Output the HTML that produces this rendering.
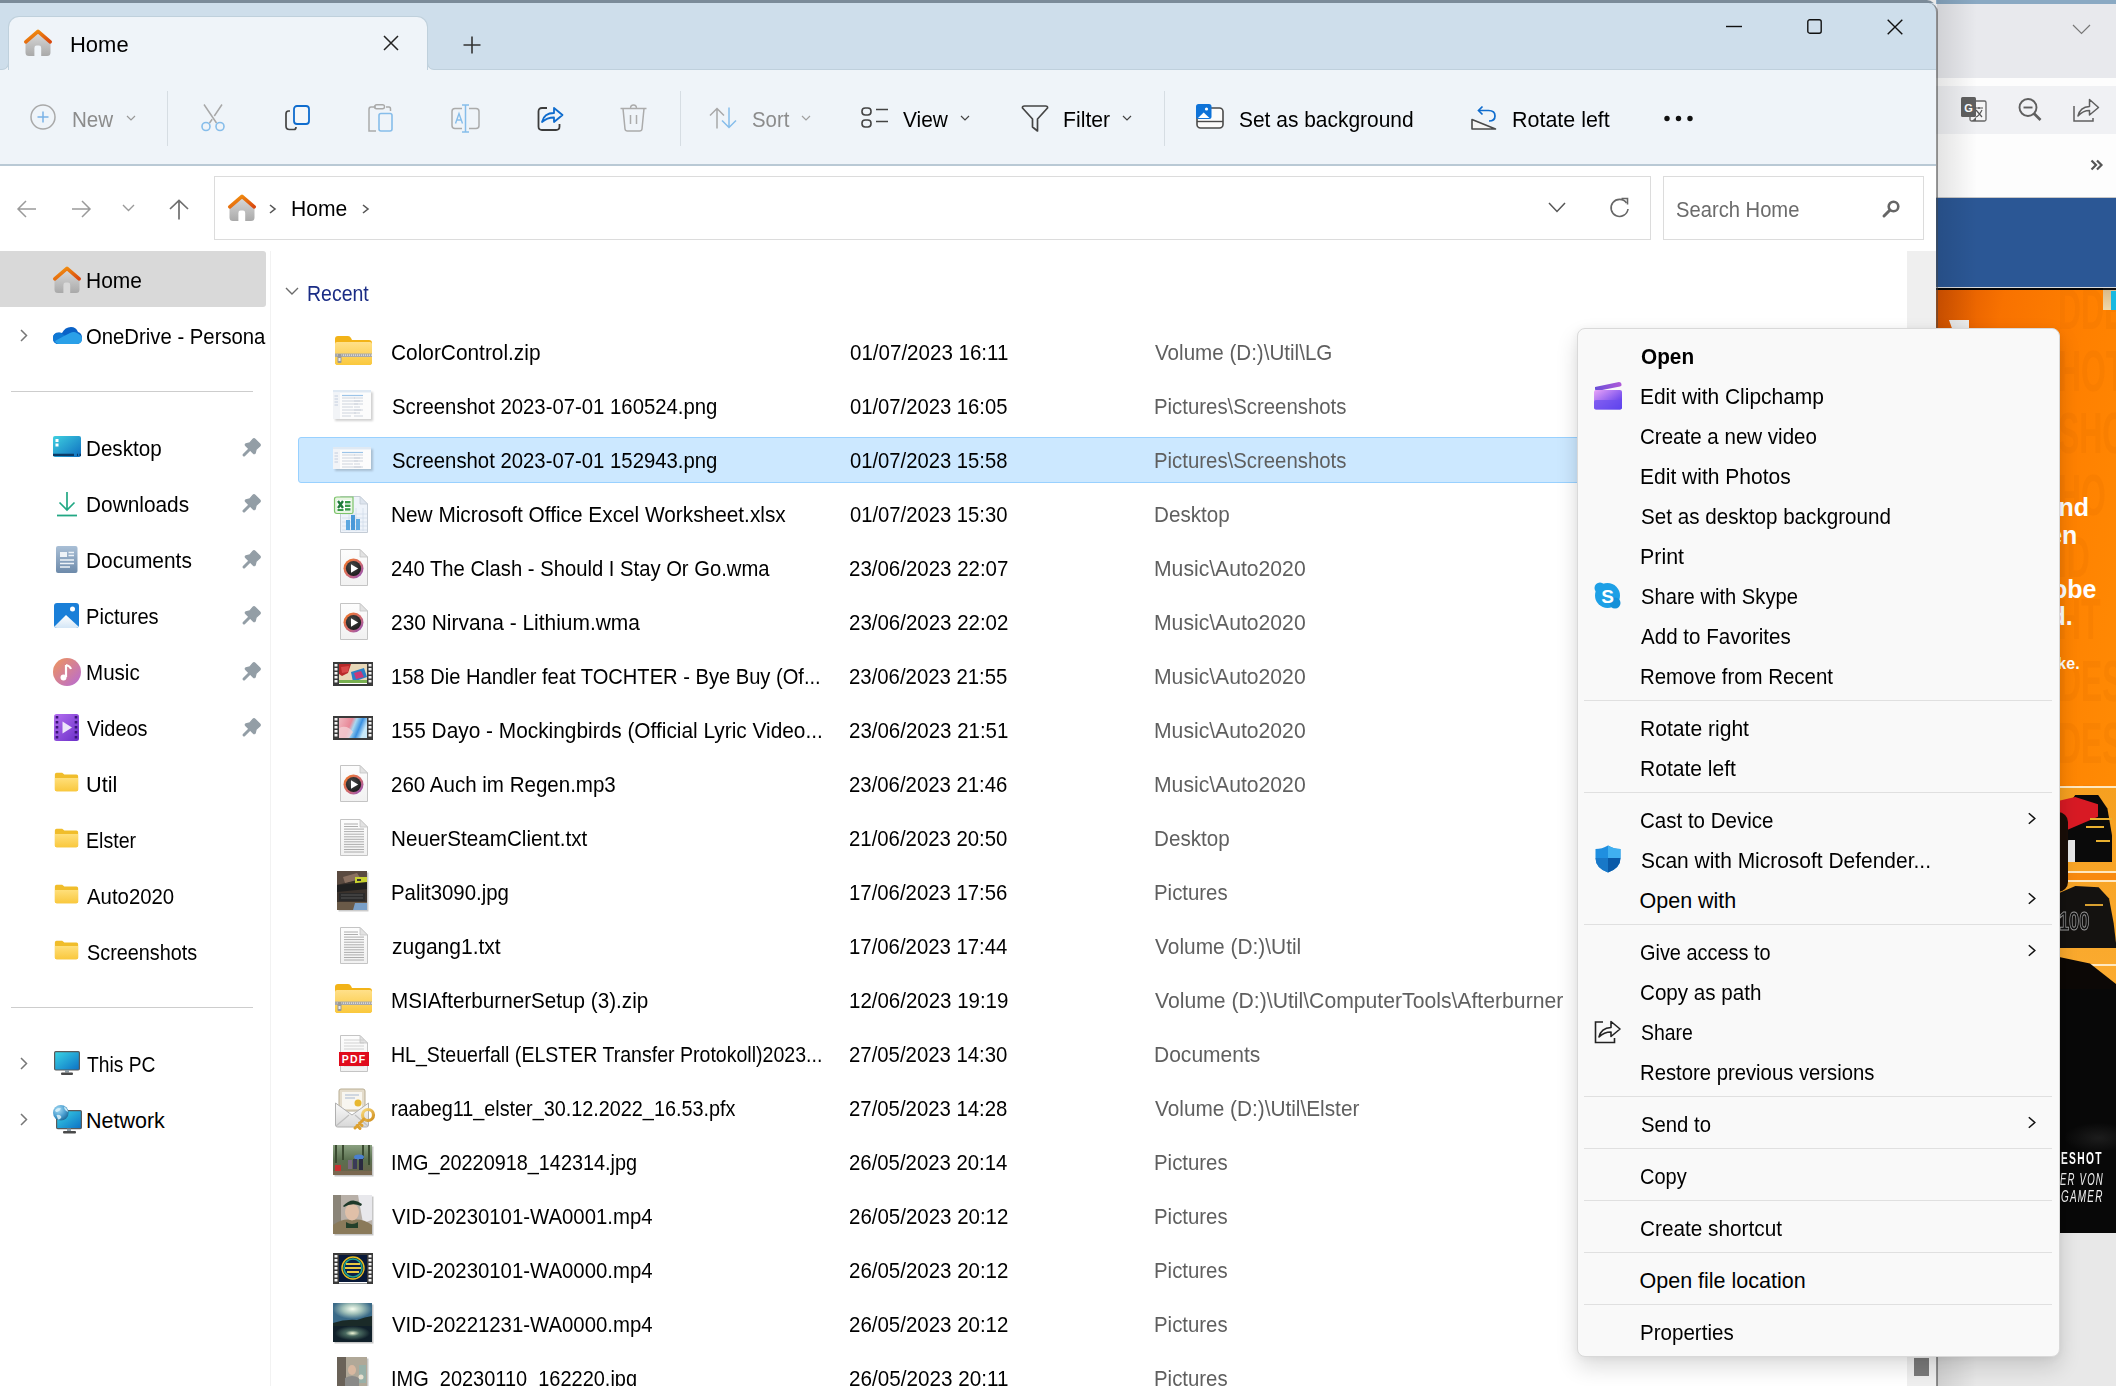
<!DOCTYPE html><html><head><meta charset="utf-8"><style>
*{margin:0;padding:0;box-sizing:border-box}
html,body{width:2116px;height:1386px;overflow:hidden;background:#e9e9e9;font-family:"Liberation Sans",sans-serif;}
.a{position:absolute}
.t{position:absolute;white-space:nowrap;font-family:"Liberation Sans",sans-serif}
svg{position:absolute;overflow:visible}
</style></head><body><div class="a" style="left:1936px;top:0;width:180px;height:1386px;background:#e8e8e8"></div>
<div class="a" style="left:1936px;top:0;width:180px;height:4px;background:#8aa9c3"></div>
<div class="a" style="left:1936px;top:4px;width:180px;height:74px;background:#e8e9ed"></div>
<div class="a" style="left:1936px;top:78px;width:180px;height:8px;background:#fdfdfd"></div>
<div class="a" style="left:1936px;top:86px;width:180px;height:48px;background:#f0f1f4"></div>
<div class="a" style="left:1936px;top:134px;width:180px;height:63px;background:#fdfdfd"></div>
<div class="a" style="left:1936px;top:197px;width:180px;height:1px;background:#c8c8c8"></div>
<div class="a" style="left:1936px;top:198px;width:180px;height:90px;background:#2b5795"></div>
<div class="a" style="left:1936px;top:288px;width:180px;height:2px;background:#111"></div>
<div class="a" style="left:1936px;top:287px;width:180px;height:1px;background:#dcdcdc"></div><div class="a" style="left:1936px;top:288px;width:167px;height:2px;background:#050505"></div><div class="a" style="left:1936px;top:290px;width:180px;height:943px;overflow:hidden;background:linear-gradient(100deg,#d95400 0%,#f87200 20%,#ff8000 45%,#ff8a04 75%,#ff9410 100%)"><div class="t" style="left:122px;top:-12px;font-size:58px;font-weight:700;color:rgba(210,100,0,0.13);line-height:62px;transform:scaleX(0.55);transform-origin:0 0">DDES<br>HOT<br>SHO<br>HO<br>ID<br>HT<br>DES<br>DES<br>ND<br>ES<br>DS<br>HO</div><div class="a" style="left:13px;top:30px;width:20px;height:10px;background:#efefef;clip-path:polygon(0 0,100% 0,100% 100%,18% 100%)"></div><div class="a" style="left:167px;top:-1px;width:13px;height:21px;background:linear-gradient(180deg,#d8b888,#f0d8a8)"></div><div class="a" style="left:175px;top:1px;width:5px;height:19px;background:#18b8e0"></div><div class="t" style="left:2058px;top:0;font-size:22px;font-weight:700;color:#fff;line-height:27px;transform:scaleX(0.92);transform-origin:0 0"></div></div><div class="t" style="right:27px;top:492.7px;font-size:25px;font-weight:700;color:#fff;line-height:28px">and</div><div class="t" style="right:38.6px;top:520.8px;font-size:25px;font-weight:700;color:#fff;line-height:28px">en</div><div class="t" style="right:19.5px;top:575px;font-size:25px;font-weight:700;color:#fff;line-height:28px">obe</div><div class="t" style="right:43.2px;top:601.7px;font-size:25px;font-weight:700;color:#fff;line-height:28px">d.</div><div class="t" style="right:36.4px;top:653.7px;font-size:16px;font-weight:700;color:#fff;line-height:20px">ke.</div><div class="a" style="left:2058px;top:786px;width:58px;height:447px;background:#080808"></div><div class="a" style="left:2058px;top:786px;width:58px;height:200px;background:linear-gradient(180deg,#f6a020,#fbab30)"></div><div class="a" style="left:2058px;top:786px;width:58px;height:2px;background:#ffe8c0"></div><div class="a" style="left:2058px;top:871px;width:58px;height:2px;background:#ffe8c0"></div><div class="a" style="left:2058px;top:873px;width:58px;height:7px;background:#f88a10"></div><div class="a" style="left:2058px;top:880px;width:58px;height:2px;background:#ffe8c0"></div><div class="a" style="left:2058px;top:964px;width:58px;height:2px;background:#ffe8c0"></div><div class="a" style="left:2058px;top:955px;width:58px;height:34px;background:#0c0806;clip-path:polygon(0 5%,55% 25%,100% 85%,100% 100%,0 100%)"></div><div class="a" style="left:2066px;top:795px;width:46px;height:67px;background:#0a0a0a;clip-path:polygon(20% 0,70% 0,90% 20%,100% 60%,100% 100%,0 100%,0 20%)"></div><div class="a" style="left:2060px;top:797px;width:38px;height:36px;background:#d81a24;clip-path:polygon(0 10%,40% 0,100% 20%,100% 55%,0 100%)"></div><div class="a" style="left:2090px;top:818px;width:22px;height:2px;background:#e8b030"></div><div class="a" style="left:2086px;top:826px;width:18px;height:2px;background:#e8b030"></div><div class="a" style="left:2096px;top:840px;width:14px;height:2px;background:#e8b030"></div><div class="a" style="left:2063px;top:840px;width:12px;height:22px;background:#e8e8e8;border-radius:50% 0 0 0"></div><div class="a" style="left:2058px;top:886px;width:58px;height:62px;background:#141210;clip-path:polygon(0 12%,30% 0,70% 2%,88% 20%,96% 60%,100% 92%,100% 100%,0 100%)"></div><div class="t" style="left:2059px;top:906px;font-size:26px;font-weight:700;color:#111;-webkit-text-stroke:1px #999;line-height:30px;transform:scaleX(0.7);transform-origin:0 0">100</div><div class="a" style="left:2085px;top:904px;width:18px;height:2px;background:#d8a030"></div><div class="a" style="left:2058px;top:812px;width:10px;height:80px;background:#1a0e08;border-radius:0 10px 10px 0"></div><div class="a" style="left:2058px;top:1120px;width:58px;height:30px;background:radial-gradient(ellipse at 70% 60%,rgba(90,90,90,0.25),rgba(0,0,0,0) 60%)"></div><div class="t" style="left:2061px;top:1151.1px;font-size:16px;font-weight:700;color:#fff;line-height:16px;letter-spacing:2px;transform:scaleX(0.64);transform-origin:0 0">ESHOT</div><div class="t" style="left:2060px;top:1171.9px;font-size:16px;font-style:italic;color:#f2f2f2;line-height:16px;letter-spacing:2px;transform:scaleX(0.6);transform-origin:0 0">ER VON</div><div class="t" style="left:2061px;top:1189.2px;font-size:16px;font-style:italic;color:#f2f2f2;line-height:16px;letter-spacing:2px;transform:scaleX(0.62);transform-origin:0 0">GAMER</div>
<svg style="left:2072px;top:24px" width="19" height="11" viewBox="0 0 19 11"><path d="M1 1 L9.5 9.5 L18 1" fill="none" stroke="#777" stroke-width="1.2"/></svg><svg style="left:1961px;top:97px" width="26" height="26" viewBox="0 0 26 26"><rect x="9" y="4" width="16" height="20" rx="1.5" fill="#f5f5f5" stroke="#666" stroke-width="1.3"/><rect x="0" y="0" width="15" height="20" rx="1.5" fill="#5f5f5f"/><path d="M15 20 L11 24 L15 24 Z" fill="#5f5f5f"/><text x="7.5" y="14.5" font-family="Liberation Sans" font-weight="700" font-size="11" fill="#fff" text-anchor="middle">G</text><path d="M14 11 H22 M18 10 V12 M15 13 L21 20 M21 13 Q18 19 15 20" fill="none" stroke="#555" stroke-width="1.2"/></svg><svg style="left:2018px;top:98px" width="24" height="24" viewBox="0 0 24 24"><circle cx="10" cy="9.5" r="8.5" fill="none" stroke="#5f5f5f" stroke-width="1.9"/><path d="M5.5 9.5 H14.5" stroke="#5f5f5f" stroke-width="1.9"/><path d="M16 15.5 L22.5 22" stroke="#5f5f5f" stroke-width="2.6"/></svg><svg style="left:2073px;top:98px" width="27" height="24" viewBox="0 0 27 24"><path d="M1 8 V23 H20 V20" fill="none" stroke="#5f5f5f" stroke-width="1.5"/><path d="M5 18 Q7 9 16.5 8.5 V1.5 L25.5 9.5 L16.5 17 V12.5 Q10 12.5 5 18 Z" fill="none" stroke="#5f5f5f" stroke-width="1.5" stroke-linejoin="round"/></svg><svg style="left:2090px;top:159px" width="13" height="12" viewBox="0 0 13 12"><path d="M1.5 1.5 L6 6 L1.5 10.5 M7 1.5 L11.5 6 L7 10.5" fill="none" stroke="#555" stroke-width="2.2"/></svg>
<div class="a" style="left:1937px;top:0;width:40px;height:1386px;background:linear-gradient(90deg,rgba(0,0,0,0.10),rgba(0,0,0,0))"></div>
<div class="a" style="left:0;top:0;width:1936px;height:1386px;overflow:hidden;border-top-right-radius:9px">
<div class="a" style="left:0;top:0;width:1936px;height:1386px;background:#fff"></div>
<div class="a" style="left:0;top:0;width:1936px;height:3px;background:#7b8b99"></div>
<div class="a" style="left:0;top:3px;width:1936px;height:67px;background:#eff4f9"></div>
<div class="a" style="left:0;top:3px;width:1936px;height:24px;background:#cedeeb"></div>
<div class="a" style="left:-10px;top:27px;width:19px;height:43px;background:#cedeeb;border-right:1px solid #bfd0dc;border-bottom:1px solid #bfd0dc;border-bottom-right-radius:7px"></div>
<div class="a" style="left:427px;top:27px;width:1520px;height:43px;background:#cedeeb;border-left:1px solid #bfd0dc;border-bottom:1px solid #bfd0dc;border-bottom-left-radius:7px"></div>
<div class="a" style="left:8px;top:16px;width:420px;height:56px;background:#eff4f9;border:1px solid #bfd0dc;border-bottom:none;border-radius:11px 11px 0 0"></div>
<div class="a" style="left:0;top:70px;width:1936px;height:94px;background:#eff4f9"></div>
<div class="a" style="left:9px;top:70px;width:418px;height:2px;background:#eff4f9"></div>
<div class="a" style="left:0;top:164px;width:1936px;height:2px;background:#b9c9d5"></div>
<svg style="left:24px;top:29px" width="28" height="27" viewBox="0 0 28 27"><defs><linearGradient id="hg" x1="0" y1="0" x2="0" y2="1"><stop offset="0" stop-color="#dcdcdc"/><stop offset="1" stop-color="#a9a9a9"/></linearGradient>
<linearGradient id="hr" x1="0" y1="0" x2="1" y2="1"><stop offset="0" stop-color="#f59a10"/><stop offset="1" stop-color="#d9480f"/></linearGradient></defs>
<path d="M1.5 12.5 L14 2.5 L26.5 12.5 V23.5 Q26.5 27 23 27 H17.2 V19 Q17.2 16.6 15 16.6 H12.6 Q10.4 16.6 10.4 19 V27 H5 Q1.5 27 1.5 23.5 Z" fill="url(#hg)"/>
<path d="M1.8 12.8 L14 2.3 L26.2 12.8" fill="none" stroke="url(#hr)" stroke-width="3.6" stroke-linecap="round" stroke-linejoin="round"/></svg><svg style="left:383px;top:35px" width="16" height="16" viewBox="0 0 16 16"><path d="M1 1 L15 15 M15 1 L1 15" stroke="#222" stroke-width="1.5"/></svg><svg style="left:463px;top:36px" width="18" height="18" viewBox="0 0 18 18"><path d="M9 0.5 V17.5 M0.5 9 H17.5" stroke="#333" stroke-width="1.6"/></svg><svg style="left:1726px;top:25px" width="16" height="3" viewBox="0 0 16 3"><path d="M0 1.5 H16" stroke="#111" stroke-width="1.4"/></svg><svg style="left:1807px;top:19px" width="15" height="15" viewBox="0 0 15 15"><rect x="0.8" y="0.8" width="13.4" height="13.4" rx="2" fill="none" stroke="#111" stroke-width="1.4"/></svg><svg style="left:1887px;top:19px" width="16" height="16" viewBox="0 0 16 16"><path d="M0.7 0.7 L15.3 15.3 M15.3 0.7 L0.7 15.3" stroke="#111" stroke-width="1.4"/></svg>
<div class="t" style="left:69.68px;top:24.9px;height:40px;line-height:40px;font-size:21.5px;color:#000;font-weight:400;transform:scaleX(1.0218);transform-origin:0 0;">Home</div>
<svg style="left:30px;top:104px" width="26" height="26" viewBox="0 0 26 26"><circle cx="13" cy="13" r="12" fill="none" stroke="#a9a9a9" stroke-width="1.5"/><path d="M13 7.5 V18.5 M7.5 13 H18.5" stroke="#79b1e6" stroke-width="1.5"/></svg><svg style="left:126px;top:115px" width="10" height="7" viewBox="0 0 10 7"><path d="M1 1 L5 5 L9 1" fill="none" stroke="#999" stroke-width="1.2"/></svg><svg style="left:200px;top:104px" width="26" height="28" viewBox="0 0 26 28"><path d="M4 0.5 L16.5 19 M22 0.5 L14.3 12 M12.2 15.2 L9.5 19" stroke="#a8a8a8" stroke-width="1.5" fill="none"/><circle cx="6" cy="22.5" r="4" fill="none" stroke="#86bdea" stroke-width="1.6"/><circle cx="20" cy="22.5" r="4" fill="none" stroke="#86bdea" stroke-width="1.6"/></svg><svg style="left:285px;top:105px" width="26" height="26" viewBox="0 0 26 26"><path d="M5 6 H3.5 Q1 6 1 9 V21 Q1 24.5 4.5 24.5 H9 Q11 24.5 11 22" fill="none" stroke="#444" stroke-width="1.7"/><rect x="9" y="1" width="15" height="18" rx="3" fill="#f4f7fa" stroke="#0f6cce" stroke-width="1.8"/></svg><svg style="left:368px;top:104px" width="26" height="29" viewBox="0 0 26 29"><path d="M8 3 H3 Q1 3 1 5.5 V27 H8" fill="none" stroke="#aaa" stroke-width="1.5"/><path d="M18 3 H21 Q22.5 3 22.5 5 V7" fill="none" stroke="#aaa" stroke-width="1.5"/><rect x="6.5" y="0.8" width="10" height="4" rx="2" fill="none" stroke="#aaa" stroke-width="1.4"/><rect x="11" y="9.5" width="13" height="17.5" rx="2" fill="none" stroke="#86bdea" stroke-width="1.6"/></svg><svg style="left:451px;top:104px" width="29" height="29" viewBox="0 0 29 29"><path d="M11 4.5 H4 Q1 4.5 1 7.5 V21.5 Q1 24.5 4 24.5 H11 M18 4.5 H25 Q28 4.5 28 7.5 V21.5 Q28 24.5 25 24.5 H18" fill="none" stroke="#ababab" stroke-width="1.5"/><path d="M14.5 1 V28 M11 1 H18 M11 28 H18" stroke="#86bdea" stroke-width="1.5"/><path d="M4.5 19.5 L8 9.5 L11.5 19.5 M5.7 16 H10.3" fill="none" stroke="#86bdea" stroke-width="1.4"/></svg><svg style="left:537px;top:106px" width="27" height="25" viewBox="0 0 27 25"><path d="M10 2 H5 Q1.5 2 1.5 5.5 V20.5 Q1.5 24 5 24 H19 Q22.5 24 22.5 20.5 V18" fill="none" stroke="#3c3c3c" stroke-width="1.8"/><path d="M5 16 Q7 7 17 7 V2 L25.5 9 L17 16 V11.5 Q10 11.5 5 16 Z" fill="none" stroke="#0f6cce" stroke-width="1.8" stroke-linejoin="round"/></svg><svg style="left:620px;top:104px" width="27" height="28" viewBox="0 0 27 28"><path d="M0.5 4.5 H26.5" stroke="#ababab" stroke-width="1.5"/><path d="M10.5 4.5 Q10.5 1 13.5 1 Q16.5 1 16.5 4.5" fill="none" stroke="#ababab" stroke-width="1.4"/><path d="M3 4.5 L5 25 Q5.3 27 7.5 27 H19.5 Q21.7 27 22 25 L24 4.5" fill="none" stroke="#ababab" stroke-width="1.5"/><path d="M10.5 11 V20 M16.5 11 V20" stroke="#ababab" stroke-width="1.5"/></svg><svg style="left:709px;top:107px" width="28" height="22" viewBox="0 0 28 22"><path d="M8 21.5 V1.5 M1 8.5 L8 1.5 L15 8.5" fill="none" stroke="#a8a8a8" stroke-width="1.5"/><path d="M20 0.5 V20.5 M13 13.5 L20 20.5 L27 13.5" fill="none" stroke="#86bdea" stroke-width="1.5"/></svg><svg style="left:801px;top:115px" width="10" height="7" viewBox="0 0 10 7"><path d="M1 1 L5 5 L9 1" fill="none" stroke="#a0a0a0" stroke-width="1.2"/></svg><svg style="left:861px;top:107px" width="28" height="21" viewBox="0 0 28 21"><rect x="1" y="1" width="9" height="7" rx="3.2" fill="none" stroke="#444" stroke-width="1.6"/><rect x="1" y="13" width="9" height="7" rx="3.2" fill="none" stroke="#444" stroke-width="1.6"/><path d="M15 2.5 H27 M15 14.5 H27" stroke="#444" stroke-width="1.6"/></svg><svg style="left:960px;top:115px" width="10" height="7" viewBox="0 0 10 7"><path d="M1 1 L5 5 L9 1" fill="none" stroke="#444" stroke-width="1.2"/></svg><svg style="left:1021px;top:105px" width="28" height="27" viewBox="0 0 28 27"><path d="M1.5 3 Q1 1 3.5 1 H24.5 Q27 1 26.5 3 L16.5 14 V26 L11.5 22 V14 Z" fill="none" stroke="#444" stroke-width="1.7" stroke-linejoin="round"/></svg><svg style="left:1122px;top:115px" width="10" height="7" viewBox="0 0 10 7"><path d="M1 1 L5 5 L9 1" fill="none" stroke="#444" stroke-width="1.2"/></svg><svg style="left:1196px;top:104px" width="28" height="25" viewBox="0 0 28 25"><rect x="1" y="4" width="26" height="20" rx="3.5" fill="#fbfbfb" stroke="#4a4a4a" stroke-width="1.6"/><path d="M1 17.5 H27" stroke="#4a4a4a" stroke-width="1.4"/><rect x="0" y="0" width="15.5" height="15" rx="2.5" fill="#0f73d8"/><path d="M2 14 L7.7 8.5 L13.5 14 Z" fill="#fff"/><circle cx="10.5" cy="5" r="1.6" fill="#fff"/></svg><svg style="left:1471px;top:105px" width="26" height="25" viewBox="0 0 26 25"><path d="M1 24 V14.5 L24.5 24 Z" fill="#f6f6f6" stroke="#4a4a4a" stroke-width="1.6" stroke-linejoin="round"/><path d="M8 5.5 H17.5 Q24 5.5 24 11 Q24 16 18 16" fill="none" stroke="#0f6cce" stroke-width="1.7"/><path d="M11.5 1.5 L7.5 5.5 L11.5 9.5" fill="none" stroke="#0f6cce" stroke-width="1.7"/></svg><svg style="left:1664px;top:115px" width="30" height="7" viewBox="0 0 30 7"><circle cx="3" cy="3.5" r="2.7" fill="#111"/><circle cx="14.5" cy="3.5" r="2.7" fill="#111"/><circle cx="26" cy="3.5" r="2.7" fill="#111"/></svg>
<div class="t" style="left:72.34px;top:100.0px;height:40px;line-height:40px;font-size:21.5px;color:#8c8c8c;font-weight:400;transform:scaleX(0.9580);transform-origin:0 0;">New</div>
<div class="t" style="left:752.00px;top:100.0px;height:40px;line-height:40px;font-size:21.5px;color:#8c8c8c;font-weight:400;transform:scaleX(0.9479);transform-origin:0 0;">Sort</div>
<div class="t" style="left:902.80px;top:100.0px;height:40px;line-height:40px;font-size:21.5px;color:#000;font-weight:400;transform:scaleX(0.9725);transform-origin:0 0;">View</div>
<div class="t" style="left:1063.01px;top:100.0px;height:40px;line-height:40px;font-size:21.5px;color:#000;font-weight:400;transform:scaleX(0.9868);transform-origin:0 0;">Filter</div>
<div class="t" style="left:1239.00px;top:100.0px;height:40px;line-height:40px;font-size:21.5px;color:#000;font-weight:400;transform:scaleX(0.9740);transform-origin:0 0;">Set as background</div>
<div class="t" style="left:1511.70px;top:100.0px;height:40px;line-height:40px;font-size:21.5px;color:#000;font-weight:400;transform:scaleX(0.9977);transform-origin:0 0;">Rotate left</div>
<div class="a" style="left:167px;top:91px;width:1px;height:55px;background:#d6dde3"></div>
<div class="a" style="left:680px;top:91px;width:1px;height:55px;background:#d6dde3"></div>
<div class="a" style="left:1164px;top:91px;width:1px;height:55px;background:#d6dde3"></div>
<div class="a" style="left:214px;top:176px;width:1437px;height:64px;border:1px solid #dcdcdc;background:#fff"></div>
<div class="a" style="left:1663px;top:176px;width:261px;height:64px;border:1px solid #dcdcdc;background:#fff"></div>
<svg style="left:17px;top:200px" width="20" height="18" viewBox="0 0 20 18"><path d="M19 9 H1.5 M9 1 L1 9 L9 17" fill="none" stroke="#9a9a9a" stroke-width="1.5"/></svg><svg style="left:71px;top:200px" width="20" height="18" viewBox="0 0 20 18"><path d="M1 9 H18.5 M11 1 L19 9 L11 17" fill="none" stroke="#9a9a9a" stroke-width="1.5"/></svg><svg style="left:122px;top:204px" width="13" height="8" viewBox="0 0 13 8"><path d="M1 1 L6.5 6.5 L12 1" fill="none" stroke="#9a9a9a" stroke-width="1.4"/></svg><svg style="left:169px;top:199px" width="20" height="21" viewBox="0 0 20 21"><path d="M10 20.5 V1.5 M1 10 L10 1.5 L19 10" fill="none" stroke="#6e6e6e" stroke-width="1.7"/></svg><svg style="left:228px;top:194px" width="28" height="27" viewBox="0 0 28 27">
<path d="M1.5 12.5 L14 2.5 L26.5 12.5 V23.5 Q26.5 27 23 27 H17.2 V19 Q17.2 16.6 15 16.6 H12.6 Q10.4 16.6 10.4 19 V27 H5 Q1.5 27 1.5 23.5 Z" fill="url(#hg)"/>
<path d="M1.8 12.8 L14 2.3 L26.2 12.8" fill="none" stroke="url(#hr)" stroke-width="3.6" stroke-linecap="round" stroke-linejoin="round"/></svg><svg style="left:269px;top:204px" width="8" height="10" viewBox="0 0 8 10"><path d="M1 1 L6 5 L1 9" fill="none" stroke="#555" stroke-width="1.6"/></svg><svg style="left:362px;top:204px" width="8" height="10" viewBox="0 0 8 10"><path d="M1 1 L6 5 L1 9" fill="none" stroke="#555" stroke-width="1.6"/></svg><svg style="left:1548px;top:202px" width="18" height="11" viewBox="0 0 18 11"><path d="M1 1 L9 9.5 L17 1" fill="none" stroke="#555" stroke-width="1.5"/></svg><svg style="left:1609px;top:197px" width="21" height="21" viewBox="0 0 21 21"><path d="M17.5 6 A8.5 8.5 0 1 0 19 12" fill="none" stroke="#666" stroke-width="1.6"/><path d="M12.5 1.5 H18.5 V7.5" fill="none" stroke="#666" stroke-width="1.6"/></svg><svg style="left:1882px;top:200px" width="18" height="18" viewBox="0 0 18 18"><circle cx="11.5" cy="6.5" r="4.8" fill="none" stroke="#666" stroke-width="2.6"/><path d="M8 10 L2 16" stroke="#666" stroke-width="3" stroke-linecap="round"/></svg>
<div class="t" style="left:290.72px;top:189.1px;height:40px;line-height:40px;font-size:21.5px;color:#000;font-weight:400;transform:scaleX(0.9803);transform-origin:0 0;">Home</div>
<div class="t" style="left:1676.00px;top:189.8px;height:40px;line-height:40px;font-size:21.5px;color:#6b6b6b;font-weight:400;transform:scaleX(0.9388);transform-origin:0 0;">Search Home</div>
<div class="a" style="left:0;top:251px;width:266px;height:56px;background:#d9d9d9;border-radius:0 3px 3px 0"></div>
<div class="a" style="left:270px;top:251px;width:1px;height:1135px;background:#f2f2f2"></div>
<div class="a" style="left:11px;top:391px;width:242px;height:1px;background:#cdcdcd"></div>
<div class="a" style="left:11px;top:1007px;width:242px;height:1px;background:#cdcdcd"></div>
<div class="a" style="left:0;top:251px;width:266px;height:1135px;overflow:hidden">
<div class="t" style="left:86.03px;top:10.1px;height:40px;line-height:40px;font-size:21.5px;color:#000;font-weight:400;transform:scaleX(0.9748);transform-origin:0 0;">Home</div>
<div class="t" style="left:86.06px;top:66.1px;height:40px;line-height:40px;font-size:21.5px;color:#000;font-weight:400;transform:scaleX(0.9443);transform-origin:0 0;">OneDrive - Persona</div>
<div class="t" style="left:86.04px;top:178.1px;height:40px;line-height:40px;font-size:21.5px;color:#000;font-weight:400;transform:scaleX(0.9587);transform-origin:0 0;">Desktop</div>
<div class="t" style="left:86.03px;top:234.1px;height:40px;line-height:40px;font-size:21.5px;color:#000;font-weight:400;transform:scaleX(0.9693);transform-origin:0 0;">Downloads</div>
<div class="t" style="left:86.03px;top:290.1px;height:40px;line-height:40px;font-size:21.5px;color:#000;font-weight:400;transform:scaleX(0.9739);transform-origin:0 0;">Documents</div>
<div class="t" style="left:86.06px;top:346.1px;height:40px;line-height:40px;font-size:21.5px;color:#000;font-weight:400;transform:scaleX(0.9353);transform-origin:0 0;">Pictures</div>
<div class="t" style="left:86.04px;top:402.1px;height:40px;line-height:40px;font-size:21.5px;color:#000;font-weight:400;transform:scaleX(0.9568);transform-origin:0 0;">Music</div>
<div class="t" style="left:87.00px;top:458.1px;height:40px;line-height:40px;font-size:21.5px;color:#000;font-weight:400;transform:scaleX(0.9257);transform-origin:0 0;">Videos</div>
<div class="t" style="left:85.99px;top:514.1px;height:40px;line-height:40px;font-size:21.5px;color:#000;font-weight:400;transform:scaleX(1.0076);transform-origin:0 0;">Util</div>
<div class="t" style="left:86.09px;top:570.1px;height:40px;line-height:40px;font-size:21.5px;color:#000;font-weight:400;transform:scaleX(0.9108);transform-origin:0 0;">Elster</div>
<div class="t" style="left:87.00px;top:626.1px;height:40px;line-height:40px;font-size:21.5px;color:#000;font-weight:400;transform:scaleX(0.9468);transform-origin:0 0;">Auto2020</div>
<div class="t" style="left:87.00px;top:682.1px;height:40px;line-height:40px;font-size:21.5px;color:#000;font-weight:400;transform:scaleX(0.9220);transform-origin:0 0;">Screenshots</div>
<div class="t" style="left:87.00px;top:794.1px;height:40px;line-height:40px;font-size:21.5px;color:#000;font-weight:400;transform:scaleX(0.8956);transform-origin:0 0;">This PC</div>
<div class="t" style="left:86.00px;top:850.1px;height:40px;line-height:40px;font-size:21.5px;color:#000;font-weight:400;">Network</div>
</div>
<svg style="left:53px;top:266px" width="28" height="27" viewBox="0 0 28 27">
<path d="M1.5 12.5 L14 2.5 L26.5 12.5 V23.5 Q26.5 27 23 27 H17.2 V19 Q17.2 16.6 15 16.6 H12.6 Q10.4 16.6 10.4 19 V27 H5 Q1.5 27 1.5 23.5 Z" fill="url(#hg)"/>
<path d="M1.8 12.8 L14 2.3 L26.2 12.8" fill="none" stroke="url(#hr)" stroke-width="3.6" stroke-linecap="round" stroke-linejoin="round"/></svg><svg style="left:20px;top:329px" width="8" height="13" viewBox="0 0 8 13"><path d="M1 1 L6.5 6.5 L1 12" fill="none" stroke="#777" stroke-width="1.5"/></svg><svg style="left:53px;top:326px" width="29" height="19" viewBox="0 0 29 19"><path d="M9 7 Q12 1 18 1 Q23 1 25 6 Q29 7 29 12 Q29 18 23 18 H6 Q0 18 0 12 Q0 6 7 6.5 Z" fill="#0a62c7"/><path d="M6 18 Q0 18 0 12 Q0 8 4 7 Q8 6 11 9 L22 18 Z" fill="#0f78d4"/><path d="M11 10 L17 7 Q21 5 24 7 Q29 9 29 13 Q29 18 23 18 H6 Q3 18 2 15 Z" fill="#2aa0e8"/></svg><svg style="left:53px;top:436px" width="28" height="21" viewBox="0 0 28 21"><defs><linearGradient id="dg" x1="0" y1="0" x2="1" y2="1"><stop offset="0" stop-color="#3fd0e0"/><stop offset="1" stop-color="#0e6ec0"/></linearGradient></defs><rect x="0" y="0" width="28" height="21" rx="2" fill="url(#dg)"/><path d="M0 18.8 H21 M24 18.8 H25 M26.5 18.8 H28" stroke="#0b3a66" stroke-width="2.2"/><rect x="2.5" y="3" width="3" height="3" fill="#fff"/><rect x="2.5" y="7.5" width="3" height="3" fill="#fff"/></svg><svg style="left:242px;top:438px" width="19" height="19" viewBox="0 0 19 19"><path d="M11 1.2 Q12 0.2 13 1.2 L17.8 6 Q18.8 7 17.8 8 L14.2 11.2 L13.2 15 Q12.6 16.3 11.4 15.4 L3.6 7.6 Q2.7 6.4 4 5.8 L7.8 4.8 Z" fill="#939ea6" stroke="#939ea6" stroke-width="1.2" stroke-linejoin="round"/><path d="M7.5 11.5 L2 17" stroke="#939ea6" stroke-width="3" stroke-linecap="round"/></svg><svg style="left:55px;top:491px" width="24" height="26" viewBox="0 0 24 26"><path d="M12 1 V19 M4.5 11.5 L12 19 L19.5 11.5" fill="none" stroke="#22a884" stroke-width="1.7"/><path d="M2 24.5 H22" stroke="#22a884" stroke-width="1.8"/></svg><svg style="left:242px;top:494px" width="19" height="19" viewBox="0 0 19 19"><path d="M11 1.2 Q12 0.2 13 1.2 L17.8 6 Q18.8 7 17.8 8 L14.2 11.2 L13.2 15 Q12.6 16.3 11.4 15.4 L3.6 7.6 Q2.7 6.4 4 5.8 L7.8 4.8 Z" fill="#939ea6" stroke="#939ea6" stroke-width="1.2" stroke-linejoin="round"/><path d="M7.5 11.5 L2 17" stroke="#939ea6" stroke-width="3" stroke-linecap="round"/></svg><svg style="left:56px;top:546px" width="22" height="28" viewBox="0 0 22 28"><defs><linearGradient id="docg" x1="0" y1="0" x2="0" y2="1"><stop offset="0" stop-color="#a9bfd6"/><stop offset="1" stop-color="#6d8aaa"/></linearGradient></defs><rect x="0" y="0" width="21.5" height="27" rx="2" fill="url(#docg)"/><rect x="4" y="6" width="7" height="5" fill="#eef3f8"/><path d="M12.5 6.5 H18 M12.5 9.5 H18 M4 14 H18 M4 17.5 H18 M4 21 H14" stroke="#eef3f8" stroke-width="1.6"/></svg><svg style="left:242px;top:550px" width="19" height="19" viewBox="0 0 19 19"><path d="M11 1.2 Q12 0.2 13 1.2 L17.8 6 Q18.8 7 17.8 8 L14.2 11.2 L13.2 15 Q12.6 16.3 11.4 15.4 L3.6 7.6 Q2.7 6.4 4 5.8 L7.8 4.8 Z" fill="#939ea6" stroke="#939ea6" stroke-width="1.2" stroke-linejoin="round"/><path d="M7.5 11.5 L2 17" stroke="#939ea6" stroke-width="3" stroke-linecap="round"/></svg><svg style="left:54px;top:603px" width="26" height="25" viewBox="0 0 26 25"><defs><clipPath id="pcl"><rect x="0" y="0" width="25" height="25" rx="3"/></clipPath><linearGradient id="pmg" x1="0" y1="0" x2="0" y2="1"><stop offset="0" stop-color="#ffffff"/><stop offset="1" stop-color="#d4e6f6"/></linearGradient></defs><g clip-path="url(#pcl)"><rect x="0" y="0" width="25" height="25" fill="#1a7fd8"/><path d="M-1 25 L12 12 L26 25 Z" fill="url(#pmg)"/></g><circle cx="18.5" cy="6" r="2.5" fill="#fff"/></svg><svg style="left:242px;top:606px" width="19" height="19" viewBox="0 0 19 19"><path d="M11 1.2 Q12 0.2 13 1.2 L17.8 6 Q18.8 7 17.8 8 L14.2 11.2 L13.2 15 Q12.6 16.3 11.4 15.4 L3.6 7.6 Q2.7 6.4 4 5.8 L7.8 4.8 Z" fill="#939ea6" stroke="#939ea6" stroke-width="1.2" stroke-linejoin="round"/><path d="M7.5 11.5 L2 17" stroke="#939ea6" stroke-width="3" stroke-linecap="round"/></svg><svg style="left:53px;top:658px" width="28" height="28" viewBox="0 0 28 28"><defs><linearGradient id="mg" x1="0" y1="0" x2="1" y2="1"><stop offset="0" stop-color="#f0965a"/><stop offset="1" stop-color="#b66ad6"/></linearGradient></defs><circle cx="14" cy="14" r="14" fill="url(#mg)"/><path d="M13 7 V19" stroke="#fff" stroke-width="2.2"/><circle cx="10.5" cy="19.5" r="3" fill="#fff"/><path d="M13 7 Q17 8 18 11" fill="none" stroke="#fff" stroke-width="2"/></svg><svg style="left:242px;top:662px" width="19" height="19" viewBox="0 0 19 19"><path d="M11 1.2 Q12 0.2 13 1.2 L17.8 6 Q18.8 7 17.8 8 L14.2 11.2 L13.2 15 Q12.6 16.3 11.4 15.4 L3.6 7.6 Q2.7 6.4 4 5.8 L7.8 4.8 Z" fill="#939ea6" stroke="#939ea6" stroke-width="1.2" stroke-linejoin="round"/><path d="M7.5 11.5 L2 17" stroke="#939ea6" stroke-width="3" stroke-linecap="round"/></svg><svg style="left:54px;top:714px" width="26" height="27" viewBox="0 0 26 27"><defs><linearGradient id="vg" x1="0" y1="0" x2="1" y2="1"><stop offset="0" stop-color="#b46ef0"/><stop offset="1" stop-color="#6a2fc8"/></linearGradient></defs><rect x="0" y="0" width="25" height="27" rx="2.5" fill="url(#vg)"/><path d="M3 2 V25 M22 2 V25" stroke="#3a1478" stroke-width="2.6" stroke-dasharray="2.6 2.4"/><path d="M8.5 7.5 L18 13.5 L8.5 19.5 Z" fill="#ece4fa"/></svg><svg style="left:242px;top:718px" width="19" height="19" viewBox="0 0 19 19"><path d="M11 1.2 Q12 0.2 13 1.2 L17.8 6 Q18.8 7 17.8 8 L14.2 11.2 L13.2 15 Q12.6 16.3 11.4 15.4 L3.6 7.6 Q2.7 6.4 4 5.8 L7.8 4.8 Z" fill="#939ea6" stroke="#939ea6" stroke-width="1.2" stroke-linejoin="round"/><path d="M7.5 11.5 L2 17" stroke="#939ea6" stroke-width="3" stroke-linecap="round"/></svg><svg style="left:54px;top:772px" width="25" height="20" preserveAspectRatio="none" viewBox="0 0 29 23"><defs><linearGradient id="fg" x1="0" y1="0" x2="0" y2="1"><stop offset="0" stop-color="#ffdf7a"/><stop offset="1" stop-color="#f9c83e"/></linearGradient></defs><path d="M1 3 Q1 1 3 1 H9.5 L12 3 H26 Q28 3 28 5 V20 Q28 22 26 22 H3 Q1 22 1 20 Z" fill="#f0bd2b"/><path d="M1 7 H28 V20 Q28 22 26 22 H3 Q1 22 1 20 Z" fill="url(#fg)"/></svg><svg style="left:54px;top:828px" width="25" height="20" preserveAspectRatio="none" viewBox="0 0 29 23"><path d="M1 3 Q1 1 3 1 H9.5 L12 3 H26 Q28 3 28 5 V20 Q28 22 26 22 H3 Q1 22 1 20 Z" fill="#f0bd2b"/><path d="M1 7 H28 V20 Q28 22 26 22 H3 Q1 22 1 20 Z" fill="url(#fg)"/></svg><svg style="left:54px;top:884px" width="25" height="20" preserveAspectRatio="none" viewBox="0 0 29 23"><path d="M1 3 Q1 1 3 1 H9.5 L12 3 H26 Q28 3 28 5 V20 Q28 22 26 22 H3 Q1 22 1 20 Z" fill="#f0bd2b"/><path d="M1 7 H28 V20 Q28 22 26 22 H3 Q1 22 1 20 Z" fill="url(#fg)"/></svg><svg style="left:54px;top:940px" width="25" height="20" preserveAspectRatio="none" viewBox="0 0 29 23"><path d="M1 3 Q1 1 3 1 H9.5 L12 3 H26 Q28 3 28 5 V20 Q28 22 26 22 H3 Q1 22 1 20 Z" fill="#f0bd2b"/><path d="M1 7 H28 V20 Q28 22 26 22 H3 Q1 22 1 20 Z" fill="url(#fg)"/></svg><svg style="left:20px;top:1057px" width="8" height="13" viewBox="0 0 8 13"><path d="M1 1 L6.5 6.5 L1 12" fill="none" stroke="#777" stroke-width="1.5"/></svg><svg style="left:54px;top:1051px" width="26" height="25" viewBox="0 0 26 25"><defs><linearGradient id="pcg" x1="0" y1="0" x2="1" y2="1"><stop offset="0" stop-color="#3ad6e6"/><stop offset="1" stop-color="#0c70c4"/></linearGradient></defs><rect x="0.6" y="0.6" width="24.8" height="18.4" rx="1.2" fill="url(#pcg)" stroke="#5a5a5a" stroke-width="1.2"/><rect x="11" y="19" width="4" height="2.5" fill="#8a9aa4"/><rect x="7" y="21.5" width="12" height="2.6" rx="1" fill="#4a4a4a"/></svg><svg style="left:20px;top:1113px" width="8" height="13" viewBox="0 0 8 13"><path d="M1 1 L6.5 6.5 L1 12" fill="none" stroke="#777" stroke-width="1.5"/></svg><svg style="left:52px;top:1104px" width="30" height="31" viewBox="0 0 30 31"><defs><radialGradient id="glb" cx="0.35" cy="0.3" r="0.75"><stop offset="0" stop-color="#a8dcf4"/><stop offset="0.6" stop-color="#4a9ed0"/><stop offset="1" stop-color="#1e6a98"/></radialGradient></defs><rect x="4.6" y="6.6" width="24.8" height="18" rx="1.2" fill="url(#pcg)" stroke="#5a5a5a" stroke-width="1.2"/><rect x="15" y="24.6" width="4" height="2.4" fill="#8a9aa4"/><rect x="11" y="27" width="13" height="2.6" rx="1" fill="#4a4a4a"/><circle cx="8.8" cy="8.7" r="7.8" fill="url(#glb)"/><path d="M3 6 Q6 3 9 4.5 Q8 7 5 8 Q3.5 8.5 3 6 Z M4.5 11 Q8 10 9.5 13 Q8 16 6 15.5 Z M12 2.5 Q15.5 4 16 8 Q13.5 7 12.5 5 Z" fill="#d8f0f8" opacity="0.9"/></svg>
<svg style="left:285px;top:287px" width="14" height="9" viewBox="0 0 14 9"><path d="M1 1 L7 7 L13 1" fill="none" stroke="#6b6b6b" stroke-width="1.4"/></svg>
<div class="t" style="left:307.09px;top:273.9px;height:40px;line-height:40px;font-size:21.5px;color:#1a2c85;font-weight:400;transform:scaleX(0.9069);transform-origin:0 0;">Recent</div>
<div class="a" style="left:298px;top:437px;width:1300px;height:46px;background:#cce8ff;border:1px solid #99d1ff;border-radius:3px"></div>
<div class="t" style="left:390.73px;top:332.9px;height:40px;line-height:40px;font-size:21.5px;color:#000;font-weight:400;transform:scaleX(0.9701);transform-origin:0 0;">ColorControl.zip</div>
<div class="t" style="left:849.50px;top:332.9px;height:40px;line-height:40px;font-size:21.5px;color:#000;font-weight:400;transform:scaleX(0.9555);transform-origin:0 0;">01/07/2023 16:11</div>
<div class="t" style="left:1154.60px;top:332.9px;height:40px;line-height:40px;font-size:21.5px;color:#5f5f5f;font-weight:400;transform:scaleX(0.9579);transform-origin:0 0;">Volume (D:)\Util\LG</div>
<svg style="left:335px;top:336px" width="37" height="29" viewBox="0 0 37 29"><defs><linearGradient id="zg" x1="0" y1="0" x2="0" y2="1"><stop offset="0" stop-color="#ffe08a"/><stop offset="1" stop-color="#fac83c"/></linearGradient></defs><path d="M0 3 Q0 0 3 0 H13 Q15 0 16 2 L17 4 H34 Q37 4 37 7 V26 Q37 29 34 29 H3 Q0 29 0 26 Z" fill="#f2b318"/><path d="M0 8 Q0 6 2 6 H35 Q37 6 37 8 V26 Q37 29 34 29 H3 Q0 29 0 26 Z" fill="url(#zg)"/><rect x="0" y="17.5" width="37" height="3.5" fill="#a9a9a9"/><path d="M2 19.2 H37" stroke="#e6e6e6" stroke-width="1.2" stroke-dasharray="1 1"/><rect x="2.5" y="18" width="4" height="9" rx="1" fill="#9a9a9a"/><rect x="3.5" y="22" width="2" height="3" fill="#e8e8e8"/></svg>
<div class="t" style="left:391.70px;top:386.9px;height:40px;line-height:40px;font-size:21.5px;color:#000;font-weight:400;transform:scaleX(0.9452);transform-origin:0 0;">Screenshot 2023-07-01 160524.png</div>
<div class="t" style="left:849.50px;top:386.9px;height:40px;line-height:40px;font-size:21.5px;color:#000;font-weight:400;transform:scaleX(0.9407);transform-origin:0 0;">01/07/2023 16:05</div>
<div class="t" style="left:1153.65px;top:386.9px;height:40px;line-height:40px;font-size:21.5px;color:#5f5f5f;font-weight:400;transform:scaleX(0.9474);transform-origin:0 0;">Pictures\Screenshots</div>
<svg style="left:333px;top:390px" width="40" height="31" viewBox="0 0 40 31"><rect x="2" y="2" width="38" height="29" fill="#000" opacity="0.18" filter="url(#blr)"/><defs><filter id="blr"><feGaussianBlur stdDeviation="0.8"/></filter></defs><rect x="0" y="0" width="38" height="29" fill="#fcfcfc"/><rect x="0" y="0" width="38" height="2.5" fill="#dfe9f3"/><rect x="0" y="2.5" width="7" height="26.5" fill="#f2f4f7"/><path d="M1.5 6 H5 M1.5 9 H5 M1.5 12 H5 M1.5 15 H5" stroke="#b8c4d8" stroke-width="0.8"/><path d="M9 5.5 H30" stroke="#9cc4e8" stroke-width="1.2"/><path d="M9 8 H22 M21 8 H30" stroke="#c9d0da" stroke-width="0.9"/><path d="M9 11 H30 M21 11 H27" stroke="#c9d0da" stroke-width="0.9"/><path d="M9 14 H25 M21 14 H30" stroke="#c9d0da" stroke-width="0.9"/><path d="M9 17 H20 M21 17 H27" stroke="#c9d0da" stroke-width="0.9"/><path d="M9 20 H28 M21 20 H30" stroke="#c9d0da" stroke-width="0.9"/><path d="M9 23 H23 M21 23 H27" stroke="#c9d0da" stroke-width="0.9"/><path d="M9 26 H18 M21 26 H30" stroke="#c9d0da" stroke-width="0.9"/></svg>
<div class="t" style="left:391.70px;top:440.9px;height:40px;line-height:40px;font-size:21.5px;color:#000;font-weight:400;transform:scaleX(0.9452);transform-origin:0 0;">Screenshot 2023-07-01 152943.png</div>
<div class="t" style="left:849.50px;top:440.9px;height:40px;line-height:40px;font-size:21.5px;color:#000;font-weight:400;transform:scaleX(0.9407);transform-origin:0 0;">01/07/2023 15:58</div>
<div class="t" style="left:1153.65px;top:440.9px;height:40px;line-height:40px;font-size:21.5px;color:#5f5f5f;font-weight:400;transform:scaleX(0.9474);transform-origin:0 0;">Pictures\Screenshots</div>
<svg style="left:333px;top:447px" width="40" height="24" viewBox="0 0 40 24"><rect x="2" y="2" width="38" height="22" fill="#000" opacity="0.18" filter="url(#blr)"/><defs><filter id="blr"><feGaussianBlur stdDeviation="0.8"/></filter></defs><rect x="0" y="0" width="38" height="22" fill="#fcfcfc"/><rect x="0" y="0" width="38" height="2.5" fill="#dfe9f3"/><rect x="0" y="2.5" width="7" height="19.5" fill="#f2f4f7"/><path d="M1.5 6 H5 M1.5 9 H5 M1.5 12 H5 M1.5 15 H5" stroke="#b8c4d8" stroke-width="0.8"/><path d="M9 5.5 H30" stroke="#9cc4e8" stroke-width="1.2"/><path d="M9 8 H22 M21 8 H30" stroke="#c9d0da" stroke-width="0.9"/><path d="M9 11 H30 M21 11 H27" stroke="#c9d0da" stroke-width="0.9"/><path d="M9 14 H25 M21 14 H30" stroke="#c9d0da" stroke-width="0.9"/><path d="M9 17 H20 M21 17 H27" stroke="#c9d0da" stroke-width="0.9"/><path d="M9 20 H28 M21 20 H30" stroke="#c9d0da" stroke-width="0.9"/></svg>
<div class="t" style="left:390.73px;top:494.9px;height:40px;line-height:40px;font-size:21.5px;color:#000;font-weight:400;transform:scaleX(0.9679);transform-origin:0 0;">New Microsoft Office Excel Worksheet.xlsx</div>
<div class="t" style="left:849.50px;top:494.9px;height:40px;line-height:40px;font-size:21.5px;color:#000;font-weight:400;transform:scaleX(0.9407);transform-origin:0 0;">01/07/2023 15:30</div>
<div class="t" style="left:1153.64px;top:494.9px;height:40px;line-height:40px;font-size:21.5px;color:#5f5f5f;font-weight:400;transform:scaleX(0.9600);transform-origin:0 0;">Desktop</div>
<svg style="left:334px;top:496px" width="35" height="38" viewBox="0 0 35 38"><path d="M6.5 0.5 H26 L33.5 8 V36.5 H6.5 Z" fill="#eef3fa" stroke="#c4ccd6" stroke-width="1"/><path d="M26 0.5 V8 H33.5 Z" fill="#dde4ee" stroke="#c4ccd6" stroke-width="0.8"/><path d="M8 18 H33" stroke="#d0dcea" stroke-width="0.8"/><path d="M8 22 H33" stroke="#d0dcea" stroke-width="0.8"/><path d="M8 26 H33" stroke="#d0dcea" stroke-width="0.8"/><path d="M8 30 H33" stroke="#d0dcea" stroke-width="0.8"/><path d="M8 34 H33" stroke="#d0dcea" stroke-width="0.8"/><path d="M15 12 V35 M22 12 V35 M29 12 V35" stroke="#d0dcea" stroke-width="0.8"/><rect x="12" y="24" width="4" height="10" fill="#5ea8e0"/><rect x="17" y="19" width="4" height="15" fill="#4a98d8"/><rect x="22" y="23" width="4" height="11" fill="#5ea8e0"/><path d="M0.5 3 Q0.5 1 3 1 H19 V16 Q19 17.5 17.5 17.5 H3 Q0.5 17.5 0.5 15 Z" fill="#e9f5e4" stroke="#7cc36a" stroke-width="1.2"/><rect x="3" y="4" width="14" height="11" fill="#fff"/><path d="M4 5 L9 12 M9 5 L4 12" stroke="#1f7a3a" stroke-width="2.3"/><rect x="11" y="5" width="5.5" height="2.4" fill="#3a9a4a"/><rect x="11" y="8.6" width="5.5" height="2.4" fill="#3a9a4a"/><rect x="11" y="12.2" width="5.5" height="2.4" fill="#3a9a4a"/><rect x="3.5" y="13" width="6" height="2" fill="#3a9a4a"/></svg>
<div class="t" style="left:390.76px;top:548.9px;height:40px;line-height:40px;font-size:21.5px;color:#000;font-weight:400;transform:scaleX(0.9409);transform-origin:0 0;">240 The Clash - Should I Stay Or Go.wma</div>
<div class="t" style="left:848.55px;top:548.9px;height:40px;line-height:40px;font-size:21.5px;color:#000;font-weight:400;transform:scaleX(0.9521);transform-origin:0 0;">23/06/2023 22:07</div>
<div class="t" style="left:1153.62px;top:548.9px;height:40px;line-height:40px;font-size:21.5px;color:#5f5f5f;font-weight:400;transform:scaleX(0.9836);transform-origin:0 0;">Music\Auto2020</div>
<svg style="left:340px;top:549px" width="28" height="37" viewBox="0 0 28 37"><defs><linearGradient id="pgg" x1="0" y1="0" x2="0" y2="1"><stop offset="0" stop-color="#fdfdfd"/><stop offset="1" stop-color="#f1f1f1"/></linearGradient></defs><path d="M0.5 0.5 H20 L27.5 8 V36.5 H0.5 Z" fill="url(#pgg)" stroke="#c4c4c4" stroke-width="1"/><path d="M20 0.5 V8 H27.5 Z" fill="#e2e2e2" stroke="#c4c4c4" stroke-width="0.8"/><defs><linearGradient id="mring" x1="0" y1="0" x2="1" y2="1"><stop offset="0" stop-color="#f47a20"/><stop offset="0.55" stop-color="#d06a70"/><stop offset="1" stop-color="#8a50c8"/></linearGradient><radialGradient id="mcore" cx="0.4" cy="0.35" r="0.7"><stop offset="0" stop-color="#4a4a4a"/><stop offset="1" stop-color="#1a1a1a"/></radialGradient></defs><circle cx="13.5" cy="19.5" r="10" fill="url(#mring)"/><circle cx="13.5" cy="19.5" r="7.6" fill="url(#mcore)"/><path d="M11 15.2 L18.2 19.5 L11 23.8 Z" fill="#fff"/></svg>
<div class="t" style="left:390.73px;top:602.9px;height:40px;line-height:40px;font-size:21.5px;color:#000;font-weight:400;transform:scaleX(0.9735);transform-origin:0 0;">230 Nirvana - Lithium.wma</div>
<div class="t" style="left:848.55px;top:602.9px;height:40px;line-height:40px;font-size:21.5px;color:#000;font-weight:400;transform:scaleX(0.9521);transform-origin:0 0;">23/06/2023 22:02</div>
<div class="t" style="left:1153.62px;top:602.9px;height:40px;line-height:40px;font-size:21.5px;color:#5f5f5f;font-weight:400;transform:scaleX(0.9836);transform-origin:0 0;">Music\Auto2020</div>
<svg style="left:340px;top:603px" width="28" height="37" viewBox="0 0 28 37"><defs><linearGradient id="pgg" x1="0" y1="0" x2="0" y2="1"><stop offset="0" stop-color="#fdfdfd"/><stop offset="1" stop-color="#f1f1f1"/></linearGradient></defs><path d="M0.5 0.5 H20 L27.5 8 V36.5 H0.5 Z" fill="url(#pgg)" stroke="#c4c4c4" stroke-width="1"/><path d="M20 0.5 V8 H27.5 Z" fill="#e2e2e2" stroke="#c4c4c4" stroke-width="0.8"/><defs><linearGradient id="mring" x1="0" y1="0" x2="1" y2="1"><stop offset="0" stop-color="#f47a20"/><stop offset="0.55" stop-color="#d06a70"/><stop offset="1" stop-color="#8a50c8"/></linearGradient><radialGradient id="mcore" cx="0.4" cy="0.35" r="0.7"><stop offset="0" stop-color="#4a4a4a"/><stop offset="1" stop-color="#1a1a1a"/></radialGradient></defs><circle cx="13.5" cy="19.5" r="10" fill="url(#mring)"/><circle cx="13.5" cy="19.5" r="7.6" fill="url(#mcore)"/><path d="M11 15.2 L18.2 19.5 L11 23.8 Z" fill="#fff"/></svg>
<div class="t" style="left:390.76px;top:656.9px;height:40px;line-height:40px;font-size:21.5px;color:#000;font-weight:400;transform:scaleX(0.9356);transform-origin:0 0;">158 Die Handler feat TOCHTER - Bye Buy (Of...</div>
<div class="t" style="left:848.55px;top:656.9px;height:40px;line-height:40px;font-size:21.5px;color:#000;font-weight:400;transform:scaleX(0.9464);transform-origin:0 0;">23/06/2023 21:55</div>
<div class="t" style="left:1153.62px;top:656.9px;height:40px;line-height:40px;font-size:21.5px;color:#5f5f5f;font-weight:400;transform:scaleX(0.9836);transform-origin:0 0;">Music\Auto2020</div>
<svg style="left:333px;top:662px" width="40" height="24" viewBox="0 0 40 24"><rect x="0" y="0" width="40" height="24" fill="#3a3a3a"/><rect x="1.5" y="2" width="3" height="2.4" rx="0.5" fill="#f4f4f4"/><rect x="35.5" y="2" width="3" height="2.4" rx="0.5" fill="#f4f4f4"/><rect x="1.5" y="6" width="3" height="2.4" rx="0.5" fill="#f4f4f4"/><rect x="35.5" y="6" width="3" height="2.4" rx="0.5" fill="#f4f4f4"/><rect x="1.5" y="10" width="3" height="2.4" rx="0.5" fill="#f4f4f4"/><rect x="35.5" y="10" width="3" height="2.4" rx="0.5" fill="#f4f4f4"/><rect x="1.5" y="14" width="3" height="2.4" rx="0.5" fill="#f4f4f4"/><rect x="35.5" y="14" width="3" height="2.4" rx="0.5" fill="#f4f4f4"/><rect x="1.5" y="18" width="3" height="2.4" rx="0.5" fill="#f4f4f4"/><rect x="35.5" y="18" width="3" height="2.4" rx="0.5" fill="#f4f4f4"/><svg x="6" y="2" width="28" height="20" viewBox="0 0 28 20" preserveAspectRatio="none"><rect x="0" y="0" width="28" height="20" fill="#e8d8b8"/><path d="M0 0 H12 L9 9 L3 12 L0 10 Z" fill="#b82a2a"/><path d="M2 3 L10 2 L9 8 L3 9 Z" fill="#d84848"/><path d="M12 8 L25 4 L28 13 L14 18 Z" fill="#2a80c8"/><path d="M15 9 L22 7 L25 13 L17 15 Z" fill="#c83a78"/><path d="M0 16 H28 V20 H0 Z" fill="#78b050"/><rect x="0" y="19" width="28" height="1" fill="#fff"/></svg></svg>
<div class="t" style="left:390.73px;top:710.9px;height:40px;line-height:40px;font-size:21.5px;color:#000;font-weight:400;transform:scaleX(0.9697);transform-origin:0 0;">155 Dayo - Mockingbirds (Official Lyric Video...</div>
<div class="t" style="left:848.55px;top:710.9px;height:40px;line-height:40px;font-size:21.5px;color:#000;font-weight:400;transform:scaleX(0.9521);transform-origin:0 0;">23/06/2023 21:51</div>
<div class="t" style="left:1153.62px;top:710.9px;height:40px;line-height:40px;font-size:21.5px;color:#5f5f5f;font-weight:400;transform:scaleX(0.9836);transform-origin:0 0;">Music\Auto2020</div>
<svg style="left:333px;top:716px" width="40" height="24" viewBox="0 0 40 24"><rect x="0" y="0" width="40" height="24" fill="#3a3a3a"/><rect x="1.5" y="2" width="3" height="2.4" rx="0.5" fill="#f4f4f4"/><rect x="35.5" y="2" width="3" height="2.4" rx="0.5" fill="#f4f4f4"/><rect x="1.5" y="6" width="3" height="2.4" rx="0.5" fill="#f4f4f4"/><rect x="35.5" y="6" width="3" height="2.4" rx="0.5" fill="#f4f4f4"/><rect x="1.5" y="10" width="3" height="2.4" rx="0.5" fill="#f4f4f4"/><rect x="35.5" y="10" width="3" height="2.4" rx="0.5" fill="#f4f4f4"/><rect x="1.5" y="14" width="3" height="2.4" rx="0.5" fill="#f4f4f4"/><rect x="35.5" y="14" width="3" height="2.4" rx="0.5" fill="#f4f4f4"/><rect x="1.5" y="18" width="3" height="2.4" rx="0.5" fill="#f4f4f4"/><rect x="35.5" y="18" width="3" height="2.4" rx="0.5" fill="#f4f4f4"/><svg x="6" y="2" width="28" height="20" viewBox="0 0 28 20" preserveAspectRatio="none"><defs><linearGradient id="v2" x1="0" y1="0" x2="1" y2="0.3"><stop offset="0" stop-color="#f0b8c0"/><stop offset="0.45" stop-color="#e88898"/><stop offset="0.6" stop-color="#a8d8f0"/><stop offset="0.8" stop-color="#3a90e0"/><stop offset="1" stop-color="#c8e8f8"/></linearGradient></defs><rect x="0" y="0" width="28" height="20" fill="url(#v2)"/><path d="M0 10 Q8 6 14 14 L10 20 H0 Z" fill="#f4d0d4" opacity="0.8"/></svg></svg>
<div class="t" style="left:390.75px;top:764.9px;height:40px;line-height:40px;font-size:21.5px;color:#000;font-weight:400;transform:scaleX(0.9547);transform-origin:0 0;">260 Auch im Regen.mp3</div>
<div class="t" style="left:848.55px;top:764.9px;height:40px;line-height:40px;font-size:21.5px;color:#000;font-weight:400;transform:scaleX(0.9464);transform-origin:0 0;">23/06/2023 21:46</div>
<div class="t" style="left:1153.62px;top:764.9px;height:40px;line-height:40px;font-size:21.5px;color:#5f5f5f;font-weight:400;transform:scaleX(0.9836);transform-origin:0 0;">Music\Auto2020</div>
<svg style="left:340px;top:765px" width="28" height="37" viewBox="0 0 28 37"><defs><linearGradient id="pgg" x1="0" y1="0" x2="0" y2="1"><stop offset="0" stop-color="#fdfdfd"/><stop offset="1" stop-color="#f1f1f1"/></linearGradient></defs><path d="M0.5 0.5 H20 L27.5 8 V36.5 H0.5 Z" fill="url(#pgg)" stroke="#c4c4c4" stroke-width="1"/><path d="M20 0.5 V8 H27.5 Z" fill="#e2e2e2" stroke="#c4c4c4" stroke-width="0.8"/><defs><linearGradient id="mring" x1="0" y1="0" x2="1" y2="1"><stop offset="0" stop-color="#f47a20"/><stop offset="0.55" stop-color="#d06a70"/><stop offset="1" stop-color="#8a50c8"/></linearGradient><radialGradient id="mcore" cx="0.4" cy="0.35" r="0.7"><stop offset="0" stop-color="#4a4a4a"/><stop offset="1" stop-color="#1a1a1a"/></radialGradient></defs><circle cx="13.5" cy="19.5" r="10" fill="url(#mring)"/><circle cx="13.5" cy="19.5" r="7.6" fill="url(#mcore)"/><path d="M11 15.2 L18.2 19.5 L11 23.8 Z" fill="#fff"/></svg>
<div class="t" style="left:390.74px;top:818.9px;height:40px;line-height:40px;font-size:21.5px;color:#000;font-weight:400;transform:scaleX(0.9604);transform-origin:0 0;">NeuerSteamClient.txt</div>
<div class="t" style="left:848.55px;top:818.9px;height:40px;line-height:40px;font-size:21.5px;color:#000;font-weight:400;transform:scaleX(0.9464);transform-origin:0 0;">21/06/2023 20:50</div>
<div class="t" style="left:1153.64px;top:818.9px;height:40px;line-height:40px;font-size:21.5px;color:#5f5f5f;font-weight:400;transform:scaleX(0.9600);transform-origin:0 0;">Desktop</div>
<svg style="left:340px;top:819px" width="28" height="37" viewBox="0 0 28 37"><defs><linearGradient id="pgg" x1="0" y1="0" x2="0" y2="1"><stop offset="0" stop-color="#fdfdfd"/><stop offset="1" stop-color="#f1f1f1"/></linearGradient></defs><path d="M0.5 0.5 H20 L27.5 8 V36.5 H0.5 Z" fill="url(#pgg)" stroke="#c4c4c4" stroke-width="1"/><path d="M20 0.5 V8 H27.5 Z" fill="#e2e2e2" stroke="#c4c4c4" stroke-width="0.8"/><path d="M4 5.0 H18" stroke="#9a9a9a" stroke-width="0.8"/><path d="M4 7.5 H18" stroke="#9a9a9a" stroke-width="0.8"/><path d="M4 10.1 H24" stroke="#9a9a9a" stroke-width="0.8"/><path d="M4 12.6 H24" stroke="#9a9a9a" stroke-width="0.8"/><path d="M4 15.2 H24" stroke="#9a9a9a" stroke-width="0.8"/><path d="M4 17.8 H24" stroke="#9a9a9a" stroke-width="0.8"/><path d="M4 20.3 H24" stroke="#9a9a9a" stroke-width="0.8"/><path d="M4 22.8 H24" stroke="#9a9a9a" stroke-width="0.8"/><path d="M4 25.4 H24" stroke="#9a9a9a" stroke-width="0.8"/><path d="M4 27.9 H24" stroke="#9a9a9a" stroke-width="0.8"/><path d="M4 30.5 H24" stroke="#9a9a9a" stroke-width="0.8"/><path d="M4 33.0 H24" stroke="#9a9a9a" stroke-width="0.8"/></svg>
<div class="t" style="left:390.75px;top:872.9px;height:40px;line-height:40px;font-size:21.5px;color:#000;font-weight:400;transform:scaleX(0.9480);transform-origin:0 0;">Palit3090.jpg</div>
<div class="t" style="left:848.55px;top:872.9px;height:40px;line-height:40px;font-size:21.5px;color:#000;font-weight:400;transform:scaleX(0.9464);transform-origin:0 0;">17/06/2023 17:56</div>
<div class="t" style="left:1153.65px;top:872.9px;height:40px;line-height:40px;font-size:21.5px;color:#5f5f5f;font-weight:400;transform:scaleX(0.9484);transform-origin:0 0;">Pictures</div>
<svg style="left:337px;top:871px" width="32" height="41" viewBox="0 0 32 41"><rect x="1.5" y="1.5" width="30" height="39" fill="#000" opacity="0.2"/><rect x="0" y="0" width="30" height="39" fill="#3a322c"/><path d="M0 0 H30 V6 L0 14 Z" fill="#5a4a40"/><path d="M6 6 L20 2 L24 8 L8 12 Z" fill="#8a7060"/><path d="M18 6 H30 V13 H18 Z" fill="#c8d030"/><path d="M20 8 H24 V10 H20 Z" fill="#333"/><path d="M0 14 L30 11 V18 L0 21 Z" fill="#202020"/><path d="M2 22 H28 V30 H2 Z" fill="#2a2a2a"/><path d="M4 24 H26 M4 27 H26" stroke="#555" stroke-width="1"/><path d="M0 31 H30 V39 H0 Z" fill="#6a5a48"/><path d="M18 32 H30 V39 H16 Z" fill="#7aa0c8"/></svg>
<div class="t" style="left:391.70px;top:926.9px;height:40px;line-height:40px;font-size:21.5px;color:#000;font-weight:400;transform:scaleX(0.9776);transform-origin:0 0;">zugang1.txt</div>
<div class="t" style="left:848.55px;top:926.9px;height:40px;line-height:40px;font-size:21.5px;color:#000;font-weight:400;transform:scaleX(0.9464);transform-origin:0 0;">17/06/2023 17:44</div>
<div class="t" style="left:1154.60px;top:926.9px;height:40px;line-height:40px;font-size:21.5px;color:#5f5f5f;font-weight:400;transform:scaleX(0.9716);transform-origin:0 0;">Volume (D:)\Util</div>
<svg style="left:340px;top:927px" width="28" height="37" viewBox="0 0 28 37"><defs><linearGradient id="pgg" x1="0" y1="0" x2="0" y2="1"><stop offset="0" stop-color="#fdfdfd"/><stop offset="1" stop-color="#f1f1f1"/></linearGradient></defs><path d="M0.5 0.5 H20 L27.5 8 V36.5 H0.5 Z" fill="url(#pgg)" stroke="#c4c4c4" stroke-width="1"/><path d="M20 0.5 V8 H27.5 Z" fill="#e2e2e2" stroke="#c4c4c4" stroke-width="0.8"/><path d="M4 5.0 H18" stroke="#9a9a9a" stroke-width="0.8"/><path d="M4 7.5 H18" stroke="#9a9a9a" stroke-width="0.8"/><path d="M4 10.1 H24" stroke="#9a9a9a" stroke-width="0.8"/><path d="M4 12.6 H24" stroke="#9a9a9a" stroke-width="0.8"/><path d="M4 15.2 H24" stroke="#9a9a9a" stroke-width="0.8"/><path d="M4 17.8 H24" stroke="#9a9a9a" stroke-width="0.8"/><path d="M4 20.3 H24" stroke="#9a9a9a" stroke-width="0.8"/><path d="M4 22.8 H24" stroke="#9a9a9a" stroke-width="0.8"/><path d="M4 25.4 H24" stroke="#9a9a9a" stroke-width="0.8"/><path d="M4 27.9 H24" stroke="#9a9a9a" stroke-width="0.8"/><path d="M4 30.5 H24" stroke="#9a9a9a" stroke-width="0.8"/><path d="M4 33.0 H24" stroke="#9a9a9a" stroke-width="0.8"/></svg>
<div class="t" style="left:390.74px;top:980.9px;height:40px;line-height:40px;font-size:21.5px;color:#000;font-weight:400;transform:scaleX(0.9610);transform-origin:0 0;">MSIAfterburnerSetup (3).zip</div>
<div class="t" style="left:848.55px;top:980.9px;height:40px;line-height:40px;font-size:21.5px;color:#000;font-weight:400;transform:scaleX(0.9521);transform-origin:0 0;">12/06/2023 19:19</div>
<div class="t" style="left:1154.60px;top:980.9px;height:40px;line-height:40px;font-size:21.5px;color:#5f5f5f;font-weight:400;transform:scaleX(0.9847);transform-origin:0 0;">Volume (D:)\Util\ComputerTools\Afterburner</div>
<svg style="left:335px;top:984px" width="37" height="29" viewBox="0 0 37 29"><defs><linearGradient id="zg" x1="0" y1="0" x2="0" y2="1"><stop offset="0" stop-color="#ffe08a"/><stop offset="1" stop-color="#fac83c"/></linearGradient></defs><path d="M0 3 Q0 0 3 0 H13 Q15 0 16 2 L17 4 H34 Q37 4 37 7 V26 Q37 29 34 29 H3 Q0 29 0 26 Z" fill="#f2b318"/><path d="M0 8 Q0 6 2 6 H35 Q37 6 37 8 V26 Q37 29 34 29 H3 Q0 29 0 26 Z" fill="url(#zg)"/><rect x="0" y="17.5" width="37" height="3.5" fill="#a9a9a9"/><path d="M2 19.2 H37" stroke="#e6e6e6" stroke-width="1.2" stroke-dasharray="1 1"/><rect x="2.5" y="18" width="4" height="9" rx="1" fill="#9a9a9a"/><rect x="3.5" y="22" width="2" height="3" fill="#e8e8e8"/></svg>
<div class="t" style="left:390.79px;top:1034.9px;height:40px;line-height:40px;font-size:21.5px;color:#000;font-weight:400;transform:scaleX(0.9092);transform-origin:0 0;">HL_Steuerfall (ELSTER Transfer Protokoll)2023...</div>
<div class="t" style="left:848.55px;top:1034.9px;height:40px;line-height:40px;font-size:21.5px;color:#000;font-weight:400;transform:scaleX(0.9464);transform-origin:0 0;">27/05/2023 14:30</div>
<div class="t" style="left:1153.62px;top:1034.9px;height:40px;line-height:40px;font-size:21.5px;color:#5f5f5f;font-weight:400;transform:scaleX(0.9777);transform-origin:0 0;">Documents</div>
<svg style="left:340px;top:1035px" width="28" height="38" viewBox="0 0 28 38"><defs><linearGradient id="pgg" x1="0" y1="0" x2="0" y2="1"><stop offset="0" stop-color="#fdfdfd"/><stop offset="1" stop-color="#f1f1f1"/></linearGradient></defs><path d="M0.5 0.5 H20 L27.5 8 V36.5 H0.5 Z" fill="url(#pgg)" stroke="#c4c4c4" stroke-width="1"/><path d="M20 0.5 V8 H27.5 Z" fill="#e2e2e2" stroke="#c4c4c4" stroke-width="0.8"/><path d="M4 5 H24" stroke="#c8c8c8" stroke-width="0.8"/><path d="M4 8 H24" stroke="#c8c8c8" stroke-width="0.8"/><path d="M4 11 H24" stroke="#c8c8c8" stroke-width="0.8"/><path d="M4 14 H24" stroke="#c8c8c8" stroke-width="0.8"/><path d="M4 31 H24" stroke="#d0d0d0" stroke-width="0.8"/><rect x="-1" y="17" width="30" height="14" fill="#e00b1c"/><text x="14" y="28.3" font-family="Liberation Sans" font-weight="700" font-size="10.5" fill="#fff" text-anchor="middle" letter-spacing="1.2">PDF</text></svg>
<div class="t" style="left:390.78px;top:1088.9px;height:40px;line-height:40px;font-size:21.5px;color:#000;font-weight:400;transform:scaleX(0.9214);transform-origin:0 0;">raabeg11_elster_30.12.2022_16.53.pfx</div>
<div class="t" style="left:848.55px;top:1088.9px;height:40px;line-height:40px;font-size:21.5px;color:#000;font-weight:400;transform:scaleX(0.9464);transform-origin:0 0;">27/05/2023 14:28</div>
<div class="t" style="left:1154.60px;top:1088.9px;height:40px;line-height:40px;font-size:21.5px;color:#5f5f5f;font-weight:400;transform:scaleX(0.9664);transform-origin:0 0;">Volume (D:)\Util\Elster</div>
<svg style="left:335px;top:1088px" width="41" height="43" viewBox="0 0 41 43"><defs><linearGradient id="env" x1="0" y1="0" x2="0" y2="1"><stop offset="0" stop-color="#fafafa"/><stop offset="1" stop-color="#d8d8d8"/></linearGradient><linearGradient id="key" x1="0" y1="0" x2="1" y2="1"><stop offset="0" stop-color="#f8d878"/><stop offset="1" stop-color="#d09020"/></linearGradient></defs><rect x="4" y="1" width="26" height="22" rx="2" fill="#e4dccb" stroke="#b9ae94" stroke-width="1"/><rect x="7" y="4" width="20" height="17" fill="#f8f6f0"/><path d="M10 7 H24 M10 10 H20" stroke="#a8b8d0" stroke-width="1"/><circle cx="23" cy="15" r="3.5" fill="#e8b830"/><path d="M0.5 15 L17 27 L33.5 15 V37 Q33.5 39 31.5 39 H2.5 Q0.5 39 0.5 37 Z" fill="url(#env)" stroke="#b0b0b0" stroke-width="1"/><path d="M1 38 L14 27 M33 38 L20 27" stroke="#c0c0c0" stroke-width="1.2"/><circle cx="33" cy="27" r="5.5" fill="none" stroke="url(#key)" stroke-width="3.2"/><path d="M29 31 L20 40 M22 37.5 L25 40.5 M24.5 35 L27 37.5" stroke="#dca030" stroke-width="3" stroke-linecap="round"/></svg>
<div class="t" style="left:390.78px;top:1142.9px;height:40px;line-height:40px;font-size:21.5px;color:#000;font-weight:400;transform:scaleX(0.9228);transform-origin:0 0;">IMG_20220918_142314.jpg</div>
<div class="t" style="left:848.55px;top:1142.9px;height:40px;line-height:40px;font-size:21.5px;color:#000;font-weight:400;transform:scaleX(0.9464);transform-origin:0 0;">26/05/2023 20:14</div>
<div class="t" style="left:1153.65px;top:1142.9px;height:40px;line-height:40px;font-size:21.5px;color:#5f5f5f;font-weight:400;transform:scaleX(0.9484);transform-origin:0 0;">Pictures</div>
<svg style="left:333px;top:1145px" width="41" height="32" viewBox="0 0 41 32"><rect x="1.5" y="1.5" width="39" height="30" fill="#000" opacity="0.22"/><defs><linearGradient id="i1" x1="0" y1="0" x2="0" y2="1"><stop offset="0" stop-color="#8aa080"/><stop offset="0.5" stop-color="#5a7050"/><stop offset="1" stop-color="#6a6048"/></linearGradient></defs><rect x="0" y="0" width="39" height="30" fill="url(#i1)"/><path d="M3 0 V18 M10 0 V15 M30 0 V14 M36 0 V20" stroke="#3a4a30" stroke-width="2"/><ellipse cx="26" cy="12" rx="5" ry="2.5" fill="#4a80d0"/><rect x="20" y="14" width="4" height="10" fill="#3a3a58"/><rect x="26" y="14" width="4" height="11" fill="#2a2a40"/><rect x="2" y="20" width="6" height="9" fill="#c83030"/><rect x="15" y="15" width="4" height="9" fill="#7a6a80"/><path d="M0 26 H39 V30 H0 Z" fill="#7a6850"/></svg>
<div class="t" style="left:391.70px;top:1196.9px;height:40px;line-height:40px;font-size:21.5px;color:#000;font-weight:400;transform:scaleX(0.9465);transform-origin:0 0;">VID-20230101-WA0001.mp4</div>
<div class="t" style="left:848.55px;top:1196.9px;height:40px;line-height:40px;font-size:21.5px;color:#000;font-weight:400;transform:scaleX(0.9521);transform-origin:0 0;">26/05/2023 20:12</div>
<div class="t" style="left:1153.65px;top:1196.9px;height:40px;line-height:40px;font-size:21.5px;color:#5f5f5f;font-weight:400;transform:scaleX(0.9484);transform-origin:0 0;">Pictures</div>
<svg style="left:333px;top:1195px" width="41" height="41" viewBox="0 0 41 41"><rect x="1.5" y="1.5" width="39" height="39" fill="#000" opacity="0.22"/><rect x="0" y="0" width="39" height="39" fill="#b8b0a8"/><path d="M25 0 H39 V25 L30 28 Z" fill="#e8e8ec"/><path d="M0 0 H8 V30 H0 Z" fill="#8a8478"/><path d="M0 30 Q10 23 19 25 Q29 23 39 30 V39 H0 Z" fill="#8a7a5a"/><ellipse cx="19" cy="17" rx="7" ry="8.5" fill="#e0c0a8"/><path d="M10 11 Q19 1 29 9 L28 11 Q19 7 11 12 Z" fill="#1e3a2a"/><path d="M13 27 Q19 31 25 27 V33 H13 Z" fill="#24402a"/></svg>
<div class="t" style="left:391.70px;top:1250.9px;height:40px;line-height:40px;font-size:21.5px;color:#000;font-weight:400;transform:scaleX(0.9465);transform-origin:0 0;">VID-20230101-WA0000.mp4</div>
<div class="t" style="left:848.55px;top:1250.9px;height:40px;line-height:40px;font-size:21.5px;color:#000;font-weight:400;transform:scaleX(0.9521);transform-origin:0 0;">26/05/2023 20:12</div>
<div class="t" style="left:1153.65px;top:1250.9px;height:40px;line-height:40px;font-size:21.5px;color:#5f5f5f;font-weight:400;transform:scaleX(0.9484);transform-origin:0 0;">Pictures</div>
<svg style="left:333px;top:1253px" width="40" height="31" viewBox="0 0 40 31"><rect x="0" y="0" width="40" height="31" fill="#3a3a3a"/><rect x="1.5" y="2" width="3" height="2.4" rx="0.5" fill="#f4f4f4"/><rect x="35.5" y="2" width="3" height="2.4" rx="0.5" fill="#f4f4f4"/><rect x="1.5" y="6" width="3" height="2.4" rx="0.5" fill="#f4f4f4"/><rect x="35.5" y="6" width="3" height="2.4" rx="0.5" fill="#f4f4f4"/><rect x="1.5" y="10" width="3" height="2.4" rx="0.5" fill="#f4f4f4"/><rect x="35.5" y="10" width="3" height="2.4" rx="0.5" fill="#f4f4f4"/><rect x="1.5" y="14" width="3" height="2.4" rx="0.5" fill="#f4f4f4"/><rect x="35.5" y="14" width="3" height="2.4" rx="0.5" fill="#f4f4f4"/><rect x="1.5" y="18" width="3" height="2.4" rx="0.5" fill="#f4f4f4"/><rect x="35.5" y="18" width="3" height="2.4" rx="0.5" fill="#f4f4f4"/><rect x="1.5" y="22" width="3" height="2.4" rx="0.5" fill="#f4f4f4"/><rect x="35.5" y="22" width="3" height="2.4" rx="0.5" fill="#f4f4f4"/><rect x="1.5" y="26" width="3" height="2.4" rx="0.5" fill="#f4f4f4"/><rect x="35.5" y="26" width="3" height="2.4" rx="0.5" fill="#f4f4f4"/><svg x="6" y="2" width="28" height="27" viewBox="0 0 28 27" preserveAspectRatio="none"><rect x="0" y="0" width="28" height="27" fill="#081838"/><circle cx="14" cy="13" r="11" fill="#0a2048" stroke="#e8c020" stroke-width="1.4"/><circle cx="14" cy="13" r="9" fill="none" stroke="#20a890" stroke-width="1.5"/><path d="M7 9 H21 M6 13 H22 M8 17 H20" stroke="#e8c840" stroke-width="2"/><rect x="0" y="27" width="28" height="1.5" fill="#fff"/></svg></svg>
<div class="t" style="left:391.70px;top:1304.9px;height:40px;line-height:40px;font-size:21.5px;color:#000;font-weight:400;transform:scaleX(0.9465);transform-origin:0 0;">VID-20221231-WA0000.mp4</div>
<div class="t" style="left:848.55px;top:1304.9px;height:40px;line-height:40px;font-size:21.5px;color:#000;font-weight:400;transform:scaleX(0.9521);transform-origin:0 0;">26/05/2023 20:12</div>
<div class="t" style="left:1153.65px;top:1304.9px;height:40px;line-height:40px;font-size:21.5px;color:#5f5f5f;font-weight:400;transform:scaleX(0.9484);transform-origin:0 0;">Pictures</div>
<svg style="left:333px;top:1303px" width="41" height="41" viewBox="0 0 41 41"><rect x="1.5" y="1.5" width="39" height="39" fill="#000" opacity="0.22"/><defs><radialGradient id="i3" cx="0.5" cy="0.3" r="0.5"><stop offset="0" stop-color="#f8fff0"/><stop offset="0.5" stop-color="#a0c0b8"/><stop offset="1" stop-color="#3a6a88"/></radialGradient><radialGradient id="i3b" cx="0.5" cy="0.45" r="0.45"><stop offset="0" stop-color="#f0f8d8"/><stop offset="0.4" stop-color="#4a6a60"/><stop offset="1" stop-color="#10202a"/></radialGradient></defs><rect x="0" y="0" width="39" height="20" fill="url(#i3)"/><path d="M0 20 Q12 16 24 17 Q32 14 39 13 V23 H0 Z" fill="#1a2a28"/><rect x="0" y="23" width="39" height="16" fill="url(#i3b)"/></svg>
<div class="t" style="left:390.77px;top:1358.9px;height:40px;line-height:40px;font-size:21.5px;color:#000;font-weight:400;transform:scaleX(0.9284);transform-origin:0 0;">IMG_20230110_162220.jpg</div>
<div class="t" style="left:848.54px;top:1358.9px;height:40px;line-height:40px;font-size:21.5px;color:#000;font-weight:400;transform:scaleX(0.9614);transform-origin:0 0;">26/05/2023 20:11</div>
<div class="t" style="left:1153.65px;top:1358.9px;height:40px;line-height:40px;font-size:21.5px;color:#5f5f5f;font-weight:400;transform:scaleX(0.9484);transform-origin:0 0;">Pictures</div>
<svg style="left:337px;top:1357px" width="32" height="41" viewBox="0 0 32 41"><rect x="1.5" y="1.5" width="30" height="39" fill="#000" opacity="0.22"/><rect x="0" y="0" width="30" height="39" fill="#b0a898"/><path d="M0 0 H9 V39 H0 Z" fill="#6a6258"/><path d="M22 8 H29 V26 H22 Z" fill="#98b0a8"/><ellipse cx="15" cy="13" rx="4" ry="5" fill="#d8b8a0"/><path d="M8 21 Q15 17 22 21 V39 H8 Z" fill="#8a8a88"/><circle cx="24" cy="20" r="2.5" fill="#e8e0d0"/></svg>
<div class="a" style="left:1907px;top:251px;width:29px;height:1135px;background:#efefef"></div>
<div class="a" style="left:1914px;top:1358px;width:15px;height:18px;background:#7a7a7a"></div>
</div>
<div class="a" style="left:1920px;top:3px;width:18px;height:1400px;border-right:2px solid rgba(70,70,70,0.55);border-top-right-radius:9px"></div>
<div class="a" style="left:1577px;top:328px;width:483px;height:1029px;background:#f9f9f9;border:1px solid #d9d9d9;border-radius:8px;box-shadow:0 10px 22px rgba(0,0,0,0.14),0 1px 8px rgba(0,0,0,0.05)"></div>
<div class="t" style="left:1640.50px;top:337.0px;height:40px;line-height:40px;font-size:21.5px;color:#000;font-weight:700;transform:scaleX(0.9663);transform-origin:0 0;">Open</div>
<div class="t" style="left:1639.53px;top:377.0px;height:40px;line-height:40px;font-size:21.5px;color:#000;font-weight:400;transform:scaleX(0.9742);transform-origin:0 0;">Edit with Clipchamp</div>
<div class="t" style="left:1639.54px;top:417.0px;height:40px;line-height:40px;font-size:21.5px;color:#000;font-weight:400;transform:scaleX(0.9550);transform-origin:0 0;">Create a new video</div>
<div class="t" style="left:1639.52px;top:457.0px;height:40px;line-height:40px;font-size:21.5px;color:#000;font-weight:400;transform:scaleX(0.9776);transform-origin:0 0;">Edit with Photos</div>
<div class="t" style="left:1640.50px;top:497.0px;height:40px;line-height:40px;font-size:21.5px;color:#000;font-weight:400;transform:scaleX(0.9592);transform-origin:0 0;">Set as desktop background</div>
<div class="t" style="left:1639.51px;top:537.0px;height:40px;line-height:40px;font-size:21.5px;color:#000;font-weight:400;transform:scaleX(0.9946);transform-origin:0 0;">Print</div>
<div class="t" style="left:1640.50px;top:577.0px;height:40px;line-height:40px;font-size:21.5px;color:#000;font-weight:400;transform:scaleX(0.9378);transform-origin:0 0;">Share with Skype</div>
<div class="t" style="left:1640.50px;top:617.0px;height:40px;line-height:40px;font-size:21.5px;color:#000;font-weight:400;transform:scaleX(0.9564);transform-origin:0 0;">Add to Favorites</div>
<div class="t" style="left:1639.55px;top:657.0px;height:40px;line-height:40px;font-size:21.5px;color:#000;font-weight:400;transform:scaleX(0.9498);transform-origin:0 0;">Remove from Recent</div>
<div class="t" style="left:1639.52px;top:709.0px;height:40px;line-height:40px;font-size:21.5px;color:#000;font-weight:400;transform:scaleX(0.9803);transform-origin:0 0;">Rotate right</div>
<div class="t" style="left:1639.52px;top:749.0px;height:40px;line-height:40px;font-size:21.5px;color:#000;font-weight:400;transform:scaleX(0.9791);transform-origin:0 0;">Rotate left</div>
<div class="t" style="left:1639.55px;top:801.0px;height:40px;line-height:40px;font-size:21.5px;color:#000;font-weight:400;transform:scaleX(0.9547);transform-origin:0 0;">Cast to Device</div>
<div class="t" style="left:1640.50px;top:841.0px;height:40px;line-height:40px;font-size:21.5px;color:#000;font-weight:400;transform:scaleX(0.9745);transform-origin:0 0;">Scan with Microsoft Defender...</div>
<div class="t" style="left:1639.50px;top:881.0px;height:40px;line-height:40px;font-size:21.5px;color:#000;font-weight:400;">Open with</div>
<div class="t" style="left:1639.57px;top:933.0px;height:40px;line-height:40px;font-size:21.5px;color:#000;font-weight:400;transform:scaleX(0.9262);transform-origin:0 0;">Give access to</div>
<div class="t" style="left:1639.54px;top:973.0px;height:40px;line-height:40px;font-size:21.5px;color:#000;font-weight:400;transform:scaleX(0.9588);transform-origin:0 0;">Copy as path</div>
<div class="t" style="left:1640.50px;top:1013.0px;height:40px;line-height:40px;font-size:21.5px;color:#000;font-weight:400;transform:scaleX(0.9040);transform-origin:0 0;">Share</div>
<div class="t" style="left:1639.56px;top:1053.0px;height:40px;line-height:40px;font-size:21.5px;color:#000;font-weight:400;transform:scaleX(0.9433);transform-origin:0 0;">Restore previous versions</div>
<div class="t" style="left:1640.50px;top:1105.0px;height:40px;line-height:40px;font-size:21.5px;color:#000;font-weight:400;transform:scaleX(0.9439);transform-origin:0 0;">Send to</div>
<div class="t" style="left:1639.57px;top:1157.0px;height:40px;line-height:40px;font-size:21.5px;color:#000;font-weight:400;transform:scaleX(0.9304);transform-origin:0 0;">Copy</div>
<div class="t" style="left:1639.53px;top:1209.0px;height:40px;line-height:40px;font-size:21.5px;color:#000;font-weight:400;transform:scaleX(0.9657);transform-origin:0 0;">Create shortcut</div>
<div class="t" style="left:1639.50px;top:1261.0px;height:40px;line-height:40px;font-size:21.5px;color:#000;font-weight:400;">Open file location</div>
<div class="t" style="left:1639.54px;top:1313.0px;height:40px;line-height:40px;font-size:21.5px;color:#000;font-weight:400;transform:scaleX(0.9560);transform-origin:0 0;">Properties</div>
<div class="a" style="left:1584px;top:700px;width:468px;height:1px;background:#e0e0e0"></div>
<div class="a" style="left:1584px;top:792px;width:468px;height:1px;background:#e0e0e0"></div>
<div class="a" style="left:1584px;top:924px;width:468px;height:1px;background:#e0e0e0"></div>
<div class="a" style="left:1584px;top:1096px;width:468px;height:1px;background:#e0e0e0"></div>
<div class="a" style="left:1584px;top:1148px;width:468px;height:1px;background:#e0e0e0"></div>
<div class="a" style="left:1584px;top:1200px;width:468px;height:1px;background:#e0e0e0"></div>
<div class="a" style="left:1584px;top:1252px;width:468px;height:1px;background:#e0e0e0"></div>
<div class="a" style="left:1584px;top:1304px;width:468px;height:1px;background:#e0e0e0"></div>
<svg style="left:2027px;top:811.5px" width="10" height="14" viewBox="0 0 10 14"><path d="M1.8 1.2 L7.8 6.5 L1.8 11.8" fill="none" stroke="#111" stroke-width="1.5"/></svg>
<svg style="left:2027px;top:891.5px" width="10" height="14" viewBox="0 0 10 14"><path d="M1.8 1.2 L7.8 6.5 L1.8 11.8" fill="none" stroke="#111" stroke-width="1.5"/></svg>
<svg style="left:2027px;top:943.5px" width="10" height="14" viewBox="0 0 10 14"><path d="M1.8 1.2 L7.8 6.5 L1.8 11.8" fill="none" stroke="#111" stroke-width="1.5"/></svg>
<svg style="left:2027px;top:1115.5px" width="10" height="14" viewBox="0 0 10 14"><path d="M1.8 1.2 L7.8 6.5 L1.8 11.8" fill="none" stroke="#111" stroke-width="1.5"/></svg>
<svg style="left:1594px;top:381px" width="28" height="29" viewBox="0 0 28 29"><defs><linearGradient id="cc1" x1="0" y1="0" x2="1" y2="0"><stop offset="0" stop-color="#6a4ed8"/><stop offset="1" stop-color="#b05ad8"/></linearGradient><linearGradient id="cc2" x1="0" y1="0" x2="1" y2="1"><stop offset="0" stop-color="#eaa4f8"/><stop offset="1" stop-color="#4026e8"/></linearGradient></defs><path d="M1 6 L25 1 Q27 1 27.5 3 Q28 5 26 5.5 L3 10 Q1 10 1 8 Z" fill="url(#cc1)"/><rect x="0" y="9" width="28" height="19.5" rx="2" fill="url(#cc2)"/><rect x="0" y="19" width="28" height="9.5" rx="2" fill="#6a50f0" opacity="0.7"/></svg><svg style="left:1594px;top:582px" width="27" height="27" viewBox="0 0 27 27"><circle cx="13.5" cy="13.5" r="12.5" fill="#1ea0e6"/><circle cx="6" cy="6" r="5.5" fill="#1ea0e6"/><circle cx="21" cy="21" r="5.5" fill="#1590d8"/><text x="13.5" y="20.5" font-family="Liberation Sans" font-weight="700" font-size="19" fill="#fff" text-anchor="middle">S</text></svg><svg style="left:1595px;top:845px" width="26" height="28" viewBox="0 0 26 28"><path d="M13 0.5 Q19 4 25.5 4 V13 Q25.5 23 13 27.5 Q0.5 23 0.5 13 V4 Q7 4 13 0.5 Z" fill="#1f8fe0"/><path d="M13 0.5 Q19 4 25.5 4 V13 H13 Z" fill="#40b0f0"/><path d="M13 13 H25.5 Q25.5 23 13 27.5 Z" fill="#0a5aa8"/><path d="M0.5 13 H13 V27.5 Q0.5 23 0.5 13 Z" fill="#1878c8"/></svg><svg style="left:1594px;top:1019px" width="28" height="25" viewBox="0 0 28 25"><path d="M9 3 H1.5 V23.5 H20.5 V19" fill="none" stroke="#222" stroke-width="1.6"/><path d="M5 18 Q7 9 17 8.5 V2.5 L26 10 L17 17.5 V13 Q10 13 5 18 Z" fill="none" stroke="#222" stroke-width="1.6" stroke-linejoin="round"/></svg></body></html>
